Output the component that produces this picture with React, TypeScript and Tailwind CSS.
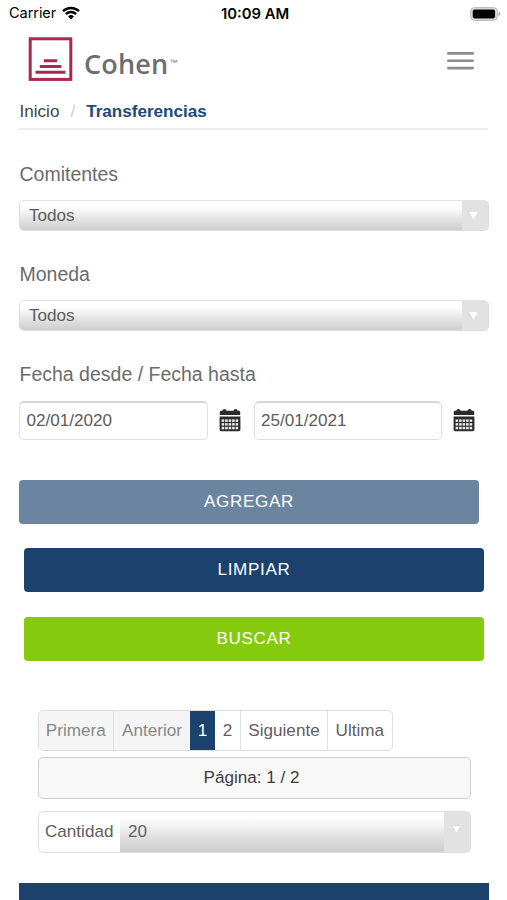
import { FC, ReactNode } from "react";
import clsx from "clsx";

const StatusBar: FC = () => (
  <div className="h-[28px] flex items-center justify-between pl-[9px] pr-[6px] font-['Inter'] text-black">
    <div className="w-[160px] flex items-center">
      <span className="text-[14.6px] tracking-[-0.1px]">Carrier</span>
      <svg className="ml-[6px] -mt-[1px]" width="18" height="14" viewBox="0 0 18 14">
        <path
          d="M1 5.2a11.4 11.4 0 0 1 16 0M3.9 8.2a7.2 7.2 0 0 1 10.2 0"
          fill="none"
          stroke="black"
          strokeWidth="2.5"
        />
        <path d="M9 13.4 6.1 10.5a4.1 4.1 0 0 1 5.8 0z" />
      </svg>
    </div>
    <span className="pt-[1px] text-[14.8px] font-semibold">10:09 AM</span>
    <div className="w-[160px] flex justify-end">
      <svg width="31" height="14" viewBox="0 0 31 14">
        <rect x="0.7" y="0.7" width="26.6" height="12.6" rx="3.6" fill="#e2e2e2" stroke="#b0b0b0" />
        <rect x="2.7" y="2.6" width="22.4" height="8.8" rx="1.8" />
        <path d="M28.6 4.8c2.2.7 2.2 3.7 0 4.4z" fill="#aaa" />
      </svg>
    </div>
  </div>
);

const Header: FC = () => (
  <div className="h-[70px] flex justify-between pl-[28px] pr-[33px]">
    <div className="flex">
      <svg className="mt-[9px]" width="45" height="45" viewBox="0 0 45 45">
        <rect x="2.2" y="1.8" width="40.6" height="40.6" fill="none" stroke="#a82850" strokeWidth="3" />
        <path
          d="M15.8 23.7h13.4M11.8 29.5h21.6M7.5 35.3h30"
          stroke="#a82850"
          strokeWidth="3"
        />
      </svg>
      <span className="ml-[11px] mt-[18px] leading-[36px] font-['Open_Sans'] font-semibold text-[27px] tracking-[0.2px] text-[#6c6e70]">
        Cohen
      </span>
      <span className="ml-[1px] mt-[31px] text-[8px] leading-[8px] text-[#6c6e70]">™</span>
    </div>
    <svg className="mt-[23px]" width="27" height="20" viewBox="0 0 27 20">
      <path
        d="M1.3 2.4h24.4M1.3 9.8h24.4M1.3 17.1h24.4"
        stroke="#8c8c8c"
        strokeWidth="2.6"
        strokeLinecap="round"
      />
    </svg>
  </div>
);

const Label: FC<{ children: ReactNode }> = ({ children }) => (
  <div className="h-[30px] pl-[0.5px] leading-[30px] text-[19.5px] text-[#6b6b6b]">{children}</div>
);

const Arrow: FC<{ small?: boolean }> = ({ small }) => (
  <svg width={small ? 9 : 11} height={small ? 9 : 10} viewBox="0 0 10 9">
    <path d="M.5.5h9L5 8.5z" fill="white" stroke="#d4d4d4" strokeWidth="0.5" />
  </svg>
);

const Select: FC<{ value: string }> = ({ value }) => (
  <div className="h-[31px] w-[469.5px] flex overflow-hidden rounded-[5px] border border-[#dcdcdc] border-t-[#e4e4e4]">
    <div className="grow pl-[9px] leading-[29px] text-[#5c5c5c] bg-linear-to-b from-white from-20% via-[#e8e8e8] via-55% to-[#cecece]">
      {value}
    </div>
    <div className="w-[25.5px] pr-[2px] flex items-center justify-center bg-[#e2e2e2]">
      <Arrow />
    </div>
  </div>
);

const CalendarIcon: FC = () => (
  <svg className="ml-[11px] mr-[13px] mt-[8px]" width="22" height="23" viewBox="0 0 22 23">
    <path
      d="M2 1.7h1.4a2 1.7 0 0 1 4 0h7.2a2 1.7 0 0 1 4 0H20q1.2 0 1.2 1.2V6H.8V2.9Q.8 1.7 2 1.7z"
      fill="#2b2b2b"
    />
    <path d="M.6 7.5h20.8v13q0 1.7-1.7 1.7H2.3Q.6 22.2.6 20.5z" fill="#2b2b2b" />
    <g fill="#e8e8e8">
      {[10.4, 14.1, 17.8].map((y) =>
        [2.6, 6.1, 9.6, 13.1, 16.6].map((x) => (
          <rect key={`${x}-${y}`} x={x} y={y} width="2.6" height="2.5" />
        ))
      )}
    </g>
  </svg>
);

const DateInput: FC<{ value: string }> = ({ value }) => (
  <div className="flex">
    <div className="w-[188.5px] h-[38.5px] pl-[6.5px] leading-[36px] rounded-[5px] border-[1.3px] border-[#e0e0e0] border-t-[2.5px] border-t-[#d6d6d6] text-[#5c5c5c]">
      {value}
    </div>
    <CalendarIcon />
  </div>
);

const Button: FC<{ className: string; children: ReactNode }> = ({ className, children }) => (
  <div
    className={clsx(
      "w-[460px] h-[44px] rounded-[4px] text-center leading-[44px] tracking-[0.65px] text-white",
      className
    )}
  >
    {children}
  </div>
);

const pages = [
  { text: "Primera", style: "w-[75.5px] bg-[#f5f5f5] text-[#888] border-r" },
  { text: "Anterior", style: "w-[76px] bg-[#f5f5f5] text-[#888]" },
  { text: "1", style: "w-[25px] bg-[#1b426c] text-white" },
  { text: "2", style: "w-[26px] text-[#606060] border-r" },
  { text: "Siguiente", style: "w-[87px] text-[#606060] border-r" },
  { text: "Ultima", style: "w-[63.5px] text-[#606060]" },
];

export default function App() {
  return (
    <div className="w-[507px] h-[900px] overflow-hidden bg-white font-['Liberation_Sans',sans-serif] text-[17.1px]">
      <StatusBar />
      <Header />
      <div className="ml-[19px] w-[470px]">
        <div className="h-[32px] mr-[1px] pl-[0.5px] border-b-2 border-[#ececec] leading-[27px] text-[#444] flex">
          <span>Inicio</span>
          <span className="ml-[11px] text-[#ccc]">/</span>
          <span className="ml-[11px] font-bold text-[#20497a]">Transferencias</span>
        </div>

        <div className="mt-[29px]">
          <Label>Comitentes</Label>
        </div>
        <div className="mt-[11px]">
          <Select value="Todos" />
        </div>
        <div className="mt-[28px]">
          <Label>Moneda</Label>
        </div>
        <div className="mt-[11px]">
          <Select value="Todos" />
        </div>
        <div className="mt-[28px]">
          <Label>Fecha desde / Fecha hasta</Label>
        </div>
        <div className="mt-[12px] h-[38px] flex">
          <DateInput value="02/01/2020" />
          <DateInput value="25/01/2021" />
        </div>

        <div className="mt-[41px] flex flex-col gap-[24.3px]">
          <Button className="bg-[#6b849f]">AGREGAR</Button>
          <Button className="ml-[5px] bg-[#1b426c]">LIMPIAR</Button>
          <Button className="ml-[5px] bg-[#85ca0c]">BUSCAR</Button>
        </div>

        <div className="mt-[49px] mx-[18.5px]">
          <div className="w-fit h-[41px] flex overflow-hidden rounded-[5px] border border-[#dedede]">
            {pages.map(({ text, style }) => (
              <span
                key={text}
                className={clsx("text-center leading-[40px] border-[#dedede]", style)}
              >
                {text}
              </span>
            ))}
          </div>
          <div className="mt-[6.5px] h-[42px] pr-[5px] rounded-[5px] border-[1.2px] border-[#cfcfcf] bg-[#f8f8f8] text-center leading-[40px] text-[#3c3c3c]">
            Página: 1 / 2
          </div>
          <div className="mt-[12px] h-[41.5px] flex overflow-hidden rounded-[5px] border border-[#dedede] leading-[40px] text-[#606060]">
            <span className="w-[81.5px] pl-[6.5px]">Cantidad</span>
            <span className="grow pl-[8px] bg-linear-to-b from-white from-15% via-[#e2e2e2] via-60% to-[#cdcdcd]">
              20
            </span>
            <span className="w-[25.5px] pt-[12.5px] flex justify-center bg-[#e2e2e2]">
              <Arrow small />
            </span>
          </div>
        </div>

        <div className="mt-[30px] h-[19px] bg-[#1b426c]" />
      </div>
    </div>
  );
}
